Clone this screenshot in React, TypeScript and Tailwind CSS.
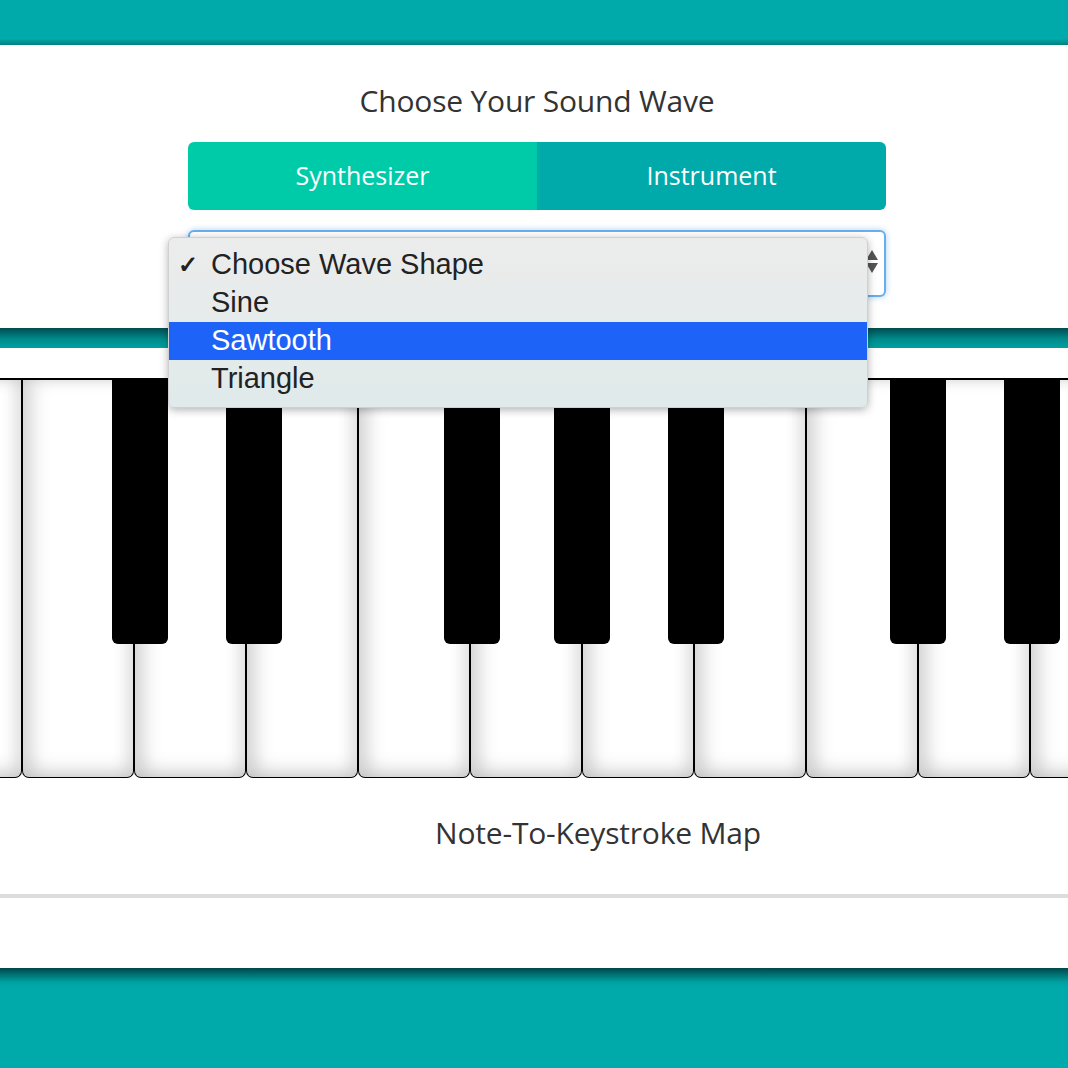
import React from "react";

const whiteKeys = Array.from({ length: 11 });
const blackKeys = [112, 226, 444, 554, 668, 890, 1004];

export default function App() {
  const heading = { fontFamily: '"Open Sans", "Noto Sans", sans-serif' };
  const menuFont = { fontFamily: '"Liberation Sans", Arial, sans-serif' };
  return (
    <div className="w-[1068px] h-[1068px] overflow-hidden bg-white flex flex-col">
      <div className="h-[45px] shrink-0 bg-[linear-gradient(to_bottom,#00aaaa_0%,#00aaaa_86%,#007f80_100%)]" />

      <div className="flex flex-col items-center pt-[37px] pl-[6px]" style={heading}>
        <h1 className="text-[30px] leading-[38px] text-[#333] tracking-[-0.2px]">Choose Your Sound Wave</h1>
        <div className="mt-[22px] w-[698px] h-[68px] flex rounded-[6px] overflow-hidden text-white text-[25px]">
          <div className="flex-1 bg-[#00cba9] flex items-center justify-center">Synthesizer</div>
          <div className="flex-1 bg-[#00a9aa] flex items-center justify-center">Instrument</div>
        </div>
        <div className="relative mt-[20px] w-[698px] h-[67px] rounded-[6px] border-2 border-[#6aaee9] shadow-[0_0_6px_rgba(80,150,230,0.45)] bg-white">
          <div className="absolute right-[6px] top-[18px] flex flex-col items-center gap-[3px]">
            <div className="w-0 h-0 border-l-[6px] border-r-[6px] border-b-[10px] border-l-transparent border-r-transparent border-b-[#555]" />
            <div className="w-0 h-0 border-l-[6px] border-r-[6px] border-t-[10px] border-l-transparent border-r-transparent border-t-[#555]" />
          </div>
          <div
            className="absolute left-[-22px] top-[5px] w-[700px] z-20 rounded-[6px] pt-[8px] pb-[9px] bg-[linear-gradient(to_bottom,#ececec,#e0eaea)] shadow-[0_2px_8px_rgba(0,0,0,0.3)] border border-[#d0d0d0] text-[29px] text-[#222]"
            style={menuFont}
          >
            <div className="relative h-[38px] flex items-center pl-[42px]">
              <span className="absolute left-[9px] text-[24px] font-bold text-[#222]">✓</span>
              Choose Wave Shape
            </div>
            <div className="h-[38px] flex items-center pl-[42px]">Sine</div>
            <div className="h-[38px] flex items-center pl-[42px] bg-[#1e63f7] text-white">Sawtooth</div>
            <div className="h-[38px] flex items-center pl-[42px]">Triangle</div>
          </div>
        </div>
      </div>

      <div className="mt-[31px] h-[20px] shrink-0 bg-[linear-gradient(to_bottom,#004c50_0%,#008a8b_55%,#00a0a0_100%)]" />

      <div className="relative mt-[30px] h-[400px] shrink-0 border-t-2 border-black overflow-hidden">
        <div className="flex h-full ml-[-90px]">
          {whiteKeys.map((_, i) => (
            <div
              key={i}
              className="w-[112px] shrink-0 h-full border border-t-0 border-black rounded-b-[7px] bg-white shadow-[inset_0_-12px_16px_rgba(0,0,0,0.08),inset_12px_0_16px_rgba(0,0,0,0.12),inset_-10px_0_12px_rgba(0,0,0,0.07)]"
            />
          ))}
        </div>
        {blackKeys.map((x) => (
          <div
            key={x}
            className="absolute top-0 w-[56px] h-[264px] bg-black rounded-b-[6px]"
            style={{ left: x }}
          />
        ))}
      </div>

      <div className="flex justify-center pl-[128px] pt-[36px]" style={heading}>
        <h2 className="text-[30px] leading-[38px] text-[#333] tracking-[-0.2px]">Note-To-Keystroke Map</h2>
      </div>

      <div className="mt-[42px] h-[4px] shrink-0 bg-[#dddddd]" />

      <div className="mt-[70px] flex-1 bg-[linear-gradient(to_bottom,#00474a_0px,#00a0a0_14px,#00aaaa_20px,#00aaaa_100%)]" />
    </div>
  );
}
